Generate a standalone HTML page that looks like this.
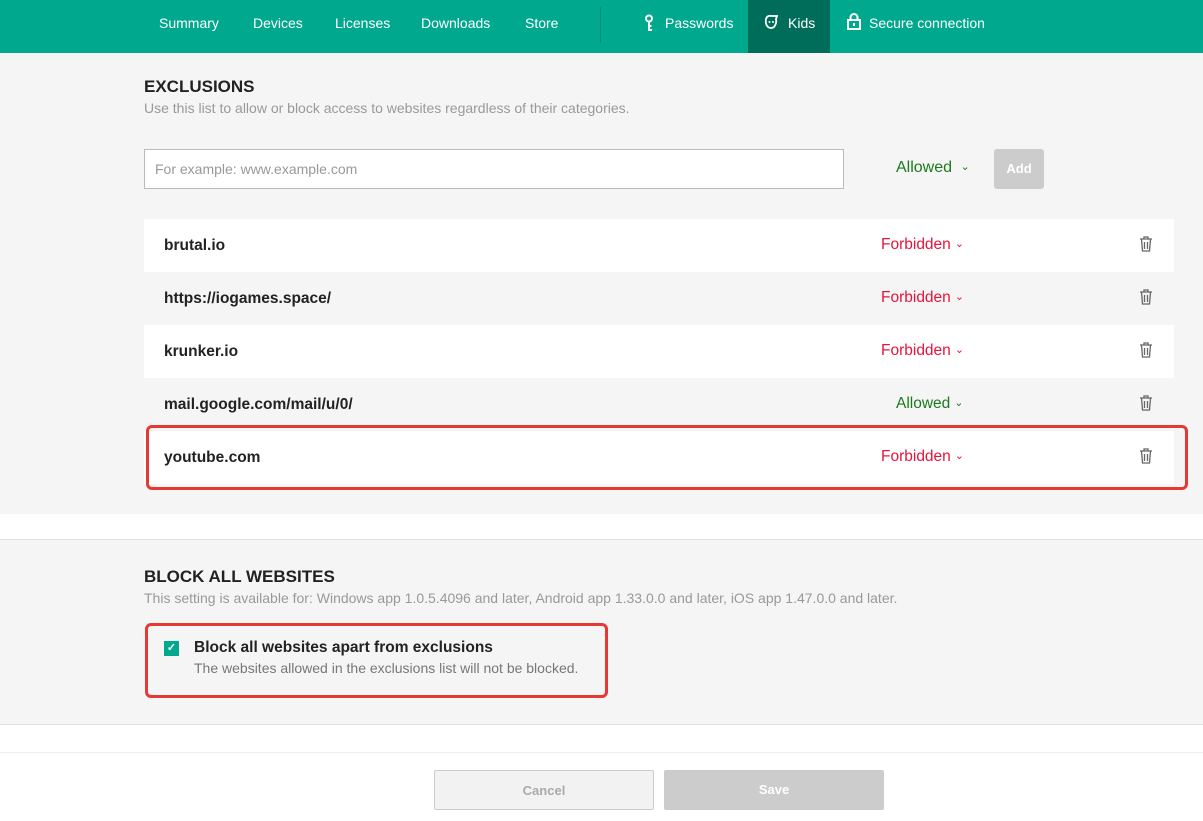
<!DOCTYPE html>
<html><head><style>
*{margin:0;padding:0;box-sizing:border-box}
body{width:1203px;height:821px;overflow:hidden;background:#fff;font-family:"Liberation Sans",sans-serif;position:relative;color:#222}
.nav{position:absolute;left:0;top:0;width:1203px;height:53px;background:#00a88e;box-shadow:0 1px 3px rgba(0,0,0,.2)}
.nav span{position:absolute;top:15px;color:#fff;font-size:14px}
.kids{position:absolute;left:748px;top:0;width:82px;height:53px;background:#006d5b}
.sep{position:absolute;left:600px;top:7px;width:1px;height:36px;background:#00907a}
.a{position:absolute}
h2{position:absolute;font-size:17px;font-weight:bold;color:#222}
.sub{position:absolute;font-size:14px;color:#999}
.row{position:absolute;left:144px;width:1030px;height:53px}
.row b{position:absolute;left:20px;top:18px;font-size:15.5px}
.st{position:absolute;top:17px;font-size:15.5px}
.st i{font-style:normal;font-size:11px;margin-left:4px;vertical-align:2px}
.f{color:#e6143c;left:737px}
.al{color:#1c7a1c;left:752px}
.tr{position:absolute;left:995px;top:17px}
.btn{position:absolute;top:770px;height:40px;width:220px;border-radius:2px;text-align:center;line-height:40px;font-size:13px;font-weight:bold}
</style></head><body>
<div class="nav">
<div class="kids"></div><div class="sep"></div>
<span style="left:159px">Summary</span><span style="left:253px">Devices</span><span style="left:335px">Licenses</span><span style="left:421px">Downloads</span><span style="left:525px">Store</span>
<svg class="a" style="left:643px;top:14px" width="12" height="18" viewBox="0 0 12 18"><circle cx="6" cy="4.5" r="3" fill="none" stroke="#fff" stroke-width="2"/><path d="M6 7.5V16h3M6 12h2.5" fill="none" stroke="#fff" stroke-width="2"/></svg>
<span style="left:665px">Passwords</span>
<svg class="a" style="left:763px;top:14px" width="16" height="16" viewBox="0 0 16 16"><path d="M3 5Q4 1 9 2L14 2 13 5Q14 9 11 13 8 15 5 13 2 10 3 5Z" fill="none" stroke="#fff" stroke-width="1.8"/><circle cx="6.5" cy="8" r="1" fill="#fff"/><circle cx="10" cy="8" r="1" fill="#fff"/></svg>
<span style="left:788px">Kids</span>
<svg class="a" style="left:847px;top:13px" width="14" height="17" viewBox="0 0 14 17"><path d="M3.5 7V4.5a3.5 3.5 0 017 0V7" fill="none" stroke="#fff" stroke-width="2"/><rect x="1" y="7" width="12" height="9" fill="none" stroke="#fff" stroke-width="2"/><rect x="6" y="10" width="2" height="3" fill="#fff"/></svg>
<span style="left:869px">Secure connection</span>
</div>
<div class="a" style="left:0;top:53px;width:1203px;height:461px;background:#f5f5f5"></div>
<h2 style="left:144px;top:77px">EXCLUSIONS</h2>
<div class="sub" style="left:144px;top:100px">Use this list to allow or block access to websites regardless of their categories.</div>
<div class="a" style="left:144px;top:149px;width:700px;height:40px;background:#fff;border:1px solid #bbb;font-size:14px;color:#999;padding:11px 10px">For example: www.example.com</div>
<div class="a" style="left:896px;top:159px;font-size:16px;color:#1c7a1c">Allowed <span style="font-size:11px;vertical-align:2px;margin-left:4px">⌄</span></div>
<div class="a" style="left:994px;top:149px;width:50px;height:40px;background:#ccc;border-radius:3px;color:#fff;font-weight:bold;font-size:13px;text-align:center;line-height:40px">Add</div>

<div class="row" style="top:219px;background:#fff"><b>brutal.io</b><span class="st f">Forbidden<i>⌄</i></span><svg class="tr" width="14" height="16" viewBox="0 0 14 16"><path d="M1 3h12M5 3V1h4v2M2.5 3l1 12h7l1-12M5.5 6v7M8.5 6v7" fill="none" stroke="#666" stroke-width="1.3"/></svg></div>
<div class="row" style="top:272px;background:#f5f5f5"><b>https://iogames.space/</b><span class="st f">Forbidden<i>⌄</i></span><svg class="tr" width="14" height="16" viewBox="0 0 14 16"><path d="M1 3h12M5 3V1h4v2M2.5 3l1 12h7l1-12M5.5 6v7M8.5 6v7" fill="none" stroke="#666" stroke-width="1.3"/></svg></div>
<div class="row" style="top:325px;background:#fff"><b>krunker.io</b><span class="st f">Forbidden<i>⌄</i></span><svg class="tr" width="14" height="16" viewBox="0 0 14 16"><path d="M1 3h12M5 3V1h4v2M2.5 3l1 12h7l1-12M5.5 6v7M8.5 6v7" fill="none" stroke="#666" stroke-width="1.3"/></svg></div>
<div class="row" style="top:378px;background:#f5f5f5"><b>mail.google.com/mail/u/0/</b><span class="st al">Allowed<i>⌄</i></span><svg class="tr" width="14" height="16" viewBox="0 0 14 16"><path d="M1 3h12M5 3V1h4v2M2.5 3l1 12h7l1-12M5.5 6v7M8.5 6v7" fill="none" stroke="#666" stroke-width="1.3"/></svg></div>
<div class="row" style="top:431px;background:#fff"><b>youtube.com</b><span class="st f">Forbidden<i>⌄</i></span><svg class="tr" width="14" height="16" viewBox="0 0 14 16"><path d="M1 3h12M5 3V1h4v2M2.5 3l1 12h7l1-12M5.5 6v7M8.5 6v7" fill="none" stroke="#666" stroke-width="1.3"/></svg></div>
<div class="a" style="left:146px;top:425px;width:1042px;height:65px;border:3px solid #e53935;border-radius:6px"></div>

<div class="a" style="left:0;top:539px;width:1203px;height:186px;background:#f5f5f5;border-top:1px solid #ddd;border-bottom:1px solid #ddd"></div>
<h2 style="left:144px;top:567px">BLOCK ALL WEBSITES</h2>
<div class="sub" style="left:144px;top:590px">This setting is available for: Windows app 1.0.5.4096 and later, Android app 1.33.0.0 and later, iOS app 1.47.0.0 and later.</div>
<div class="a" style="left:145px;top:623px;width:463px;height:75px;border:3px solid #e53935;border-radius:6px"></div>
<div class="a" style="left:164px;top:641px;width:15px;height:15px;background:#00a88e;color:#fff;font-size:11px;text-align:center;line-height:15px;font-weight:bold">✓</div>
<div class="a" style="left:194px;top:639px;font-size:15.5px;font-weight:bold">Block all websites apart from exclusions</div>
<div class="a" style="left:194px;top:660px;font-size:14px;color:#777">The websites allowed in the exclusions list will not be blocked.</div>

<div class="a" style="left:0;top:752px;width:1203px;height:1px;background:#eee"></div>
<div class="btn" style="left:434px;background:#f2f2f2;border:1px solid #ccc;color:#aaa">Cancel</div>
<div class="btn" style="left:664px;background:#ccc;color:#fff">Save</div>
</body></html>
